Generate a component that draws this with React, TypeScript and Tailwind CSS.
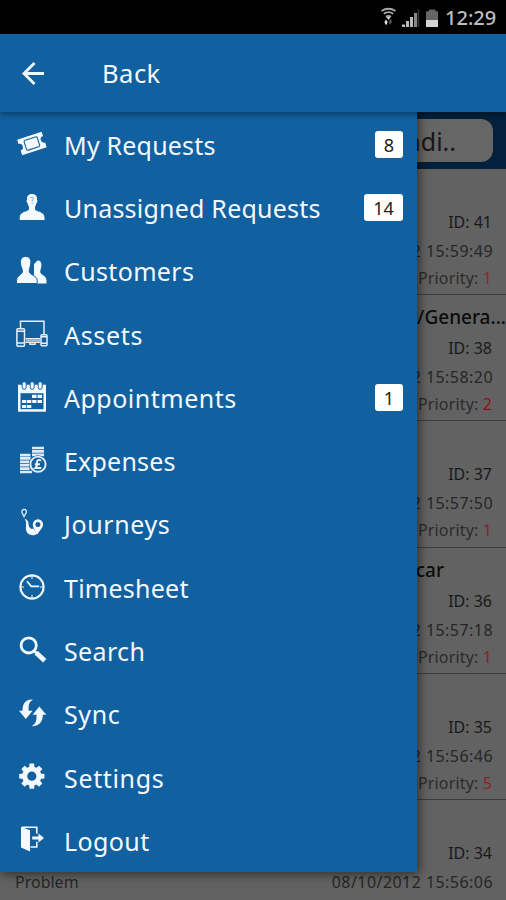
import type { ReactNode } from 'react';

const BLUE = '#1160a0';

function Icon({ children }: { children: ReactNode }) {
  return (
    <svg viewBox="0 0 32 32" className="mt-0.5 size-8 shrink-0" fill="#f4f8ff" stroke="none">
      {children}
    </svg>
  );
}

const icons: Record<string, ReactNode> = {
  ticket: (
    <g transform="rotate(-18 16 14.5)">
      <path d="M3 6.3H28.8V10.8A3.4 3.4 0 0 0 28.8 17.6V22.7H3V17.6A3.4 3.4 0 0 0 3 10.8Z" />
      <rect x="9" y="9.3" width="13.8" height="10.4" rx="1.5" fill="none" stroke={BLUE} strokeWidth="1.1" />
    </g>
  ),
  person: (
    <g>
      <path d="M16 2C20 2 21.3 4.5 21 8C21.7 8.3 21.4 10.4 20.5 11C20.2 13 19.2 14 19 15V17.5C20.5 19.8 28.5 19.5 28.5 25.5V28H3.7V25.5C3.7 19.5 11.5 19.8 13 17.5V15C12.8 14 11.8 13 11.5 11C10.6 10.4 10.3 8.3 11 8C10.7 4.5 12 2 16 2Z" />
      <path d="M14.8 5.6Q17.5 4.5 17.4 6.8Q16.2 8 16.2 9.5M16.2 11V12" fill="none" stroke={BLUE} strokeOpacity=".55" strokeWidth=".9" />
    </g>
  ),
  people: (
    <g>
      <path d="M21.5 5.5C25 5.5 25.8 8 25.3 11.5C25 13.7 24.2 15 24.2 17C24.5 20 30.5 20.3 30.5 25.5V28.5H18V9Z" />
      <path d="M9.5 1.5C14.4 1.5 15.4 5 14.6 10C14.2 12.5 13.2 14 13.2 16.5C13.7 20 21.2 20.5 21.2 25.5V28.5H.5V25.5C.5 20.5 6 20 6.5 16.5C6.5 14 5.2 12.5 4.7 10C3.8 5 5.3 1.5 9.5 1.5Z" stroke={BLUE} strokeWidth="1" />
    </g>
  ),
  devices: (
    <g fill="none" stroke="#e6effa" strokeWidth="1.5">
      <path d="M4.5 9.5V2.3H28V15M9.5 19.8H24M9.5 23.3H24M14 23.3V25.3H19V23.3" />
      <path d="M10 21.5H24" strokeOpacity=".65" />
      <rect x=".9" y="9.8" width="7.6" height="17.4" rx="1" />
      <path d="M1 12.3H8.5M1 24H8.5" />
      <rect x="25" y="15.7" width="6" height="11" rx="1" />
      <path d="M25 17.7H31M25 24.2H31" />
    </g>
  ),
  calendar: (
    <g transform="translate(0 -1.3)">
      <path d="M2 4H30V31H2Z" />
      <path d="M4.5 12.5H27.5V28.5H4.5Z" fill={BLUE} />
      <path d="M16 14H20.5V17.3H16ZM21.5 14H26V17.3H21.5ZM6 19.3H10.3V22.4H6ZM11 19.3H15.3V22.4H11ZM16.2 19.3H20.5V22.4H16.2ZM21.5 19.3H26V22.4H21.5ZM6 24.3H10.3V27.4H6ZM11 24.3H15.3V27.4H11Z" />
      <g stroke={BLUE} strokeWidth="1">
        <rect x="6.2" y="1" width="4" height="7.6" rx="2" />
        <rect x="14.2" y="1" width="4" height="7.6" rx="2" />
        <rect x="22.2" y="1" width="4" height="7.6" rx="2" />
      </g>
    </g>
  ),
  coins: (
    <g fill="#dfeaf7" transform="translate(0 -.8)">
      <path d="M16 2.5H28V5.1H16ZM16 5.9H28V8.5H16ZM16 9.3H28V12H16ZM4 9.5H14.5V12.2H4ZM4 12.9H14.5V15.6H4ZM4 16.3H13.5V19H4ZM4 19.7H13.5V22.4H4ZM4 23.1H13.5V25.8H4ZM4 26.5H16V29H4Z" />
      <circle cx="22" cy="20" r="8.9" fill={BLUE} />
      <circle cx="22" cy="20" r="7.6" fill="none" stroke="#e6effa" strokeWidth="1.9" />
      <path d="M25 16.7C23.3 14.8 20.5 15.8 21 18.2C21.4 20.2 21.5 22 19.4 23.8H25.3M18.8 20H24" fill="none" stroke="#e6effa" strokeWidth="1.9" />
    </g>
  ),
  route: (
    <g>
      <path d="M8.4 10.5C14.5 13 11.5 16.5 13.6 19.3C15 21 16 21 17.2 20.4L21.5 25.5C18.5 28.5 12.8 27.5 10.8 24C8.4 19.5 12 15 8.4 10.5Z" />
      <path d="M22 11.2A5.1 5.1 0 0 1 27 16.5C27 20 23.5 22.5 21.3 26.5C19.5 22.5 16.8 20 16.8 16.5A5.1 5.1 0 0 1 22 11.2Z" />
      <circle cx="21.9" cy="16.4" r="2.5" fill={BLUE} />
      <path d="M8.6 10.5L6.5 6.2A2.3 2.3 0 1 1 11 6.2Z" fill="none" stroke="#eaf2fc" strokeWidth="1.3" transform="translate(-.6 -2)" />
    </g>
  ),
  clock: (
    <g fill="none" stroke="#f0f6ff">
      <circle cx="16" cy="15" r="11.6" strokeWidth="2.1" />
      <path d="M11 9.3L15.2 14.4H23.2" strokeWidth="1.7" />
      <path d="M16 4V7M16 23V26M5 15H8M24 15H27" strokeWidth="1.1" />
    </g>
  ),
  search: (
    <g fill="none" stroke="#f4f8ff" transform="translate(0 -.5)">
      <circle cx="12.7" cy="10.9" r="7.6" strokeWidth="2.8" />
      <path d="M18.3 16.5L20.5 18.5" strokeWidth="3" />
      <path d="M20.2 18.3L28.7 26.3" strokeWidth="4.8" />
    </g>
  ),
  sync: (
    <g transform="translate(0 -.8)">
      <path d="M17 2.4C10 1.8 6.5 6 6.5 13.5H3L9.8 21.8L16.6 13.5H12.7C12.3 8 13 4.8 17 2.4Z" />
      <path d="M15.5 29C23 29 26.8 25 26.8 17.5H30.3L23.3 9.2L16.6 17.5H20.5C20.7 23 20 26.5 15.5 29Z" />
    </g>
  ),
  gear: (
    <g>
      <circle cx="15.8" cy="14.2" r="7.1" fill="none" stroke="#f4f8ff" strokeWidth="5" />
      <path d="M13.5 1.6H18.1L18.6 6.6H13ZM13.5 26.8H18.1L18.6 21.8H13ZM3.2 11.9V16.5L8 17V11.4ZM28.4 11.9V16.5L23.6 17V11.4ZM5.3 7L8.6 3.7L12.3 6.8L8.4 10.7ZM26.3 7L23 3.7L19.3 6.8L23.2 10.7ZM5.3 21.4L8.6 24.7L12.3 21.6L8.4 17.7ZM26.3 21.4L23 24.7L19.3 21.6L23.2 17.7Z" />
    </g>
  ),
  logout: (
    <g transform="translate(0 -.7)">
      <path d="M5 2.5L14 6V27.3L5 23.3Z" />
      <path d="M6 3H20.8V9.5M20.8 17.5V22.7H14.5" fill="none" stroke="#f4f8ff" strokeWidth="1.6" />
      <path d="M16.2 12.3H22.5V9.2L28 13.7L22.5 18.2V15.1H16.2Z" />
    </g>
  ),
};

const menu = [
  { icon: 'ticket', label: 'My Requests', badge: '8', tracking: 'tracking-[0.2px]' },
  { icon: 'person', label: 'Unassigned Requests', badge: '14', tracking: 'tracking-[0.22px]' },
  { icon: 'people', label: 'Customers', tracking: 'tracking-[0.35px]' },
  { icon: 'devices', label: 'Assets', tracking: 'tracking-[0.7px]' },
  { icon: 'calendar', label: 'Appointments', badge: '1', tracking: 'tracking-[0.5px]' },
  { icon: 'coins', label: 'Expenses', tracking: 'tracking-[0.2px]' },
  { icon: 'route', label: 'Journeys', tracking: 'tracking-[0.6px]' },
  { icon: 'clock', label: 'Timesheet', tracking: 'tracking-[0.25px]' },
  { icon: 'search', label: 'Search', tracking: 'tracking-[0.35px]' },
  { icon: 'sync', label: 'Sync', tracking: 'tracking-[0.6px]' },
  { icon: 'gear', label: 'Settings', tracking: 'tracking-[0.65px]' },
  { icon: 'logout', label: 'Logout', tracking: 'tracking-[0.4px]' },
];

const requests = [
  { id: 41, time: '2 15:59:49', priority: 1, tone: 'text-[#862d2d]' },
  { id: 38, time: '2 15:58:20', priority: 2, tone: 'text-[#8b1015]', title: '/Genera...', pad: 'pr-0' },
  { id: 37, time: '2 15:57:50', priority: 1, tone: 'text-[#862529]' },
  { id: 36, time: '2 15:57:18', priority: 1, tone: 'text-[#862529]', title: 'car', pad: 'pr-[62px]' },
  { id: 35, time: '2 15:56:46', priority: 5, tone: 'text-[#862529]' },
  { id: 34, time: '08/10/2012 15:56:06', kind: 'Problem' },
];

function StatusBar() {
  return (
    <div className="flex h-[34px] shrink-0 items-center justify-end bg-black pr-[9px] text-[#bdbdbd]">
      <svg viewBox="0 0 58 22" className="h-[22px] w-[58px]">
        <g fill="none" stroke="#aaa" strokeWidth="1.9">
          <path d="M.5 5Q7.5 .5 14.5 5M2.8 7.8Q7.5 4.5 12.2 7.8M5 10.7Q7.5 9 10 10.7" />
        </g>
        <path d="M5.5 11H9.5L7.5 14ZM5 13.5L7 16.5H6V18.5H4V16.5H3Z" fill="#ddd" />
        <path d="M9 18.5L7.5 15.5H8.5V13.5H10.5V15.5H11.5Z" fill="#555" />
        <path d="M21 18.5H24V21H21ZM25 15H28V21H25ZM29 11H32V21H29Z" fill="#bbb" />
        <path d="M33 7H36V21H33Z" fill="#888" />
        <path d="M36.5 3.5H38.3V21H36.5Z" fill="#333" />
        <path d="M45 5.2H48V3.5H54.5V5.2H57V14H45Z" fill="#666" />
        <path d="M45 14H57V21H45Z" fill="#d5d5d5" />
      </svg>
      <span className="ml-[6px] mt-0.5 w-[52px] whitespace-nowrap text-[20px] font-medium leading-none">12:29</span>
    </div>
  );
}

export default function App() {
  return (
    <div className="relative flex h-[900px] w-[506px] flex-col overflow-hidden bg-[#626262] font-['Noto_Sans',sans-serif]">
      <StatusBar />
      <header className="z-20 flex h-[78px] shrink-0 items-center bg-[#1160a0] pl-[21px] text-[#f4f8ff] shadow-[0_2px_6px_rgba(0,0,0,0.4)]">
        <svg viewBox="0 0 24 24" className="size-6" fill="none" stroke="currentColor" strokeWidth="2.8">
          <path d="M23 12.5H3M13.5 2L3 12.5L13.5 23" />
        </svg>
        <h1 className="ml-[57px] mt-0.5 text-[25.5px] leading-none tracking-[0.5px]">Back</h1>
      </header>

      <div className="flex h-[57px] shrink-0 items-center justify-end bg-[#03213c] pr-[13px]">
        <div className="flex h-[43px] w-[82px] items-center justify-end rounded-r-xl bg-[#666] pr-[37px] text-[25px] text-[#171717]">
          <span className="pt-0.5">ndi..</span>
        </div>
      </div>

      <main className="flex flex-col text-[#191919]">
        {requests.map((r) => (
          <section key={r.id} className="flex h-[126.2px] shrink-0 flex-col border-b border-[#3b3b3b] text-right">
            <div className={`h-[39px] pt-[8px] text-[19px] font-medium leading-[28px] text-[#0c0c0c] ${r.pad ?? ''}`}>{r.title}</div>
            <div className="h-[29px] pr-[14px] text-[16px] leading-[29px]">ID: {r.id}</div>
            <div className="flex h-[28px] justify-between pl-[15px] pr-[13px] text-[16px] leading-[29px] text-[#262626]">
              <span>{r.kind}</span>
              <span className="tracking-[0.45px]">{r.time}</span>
            </div>
            {r.priority && (
              <div className="pr-[14px] text-[16px] leading-[26px] tracking-[0.15px] text-[#2b2b2b]">
                Priority: <span className={r.tone}>{r.priority}</span>
              </div>
            )}
          </section>
        ))}
      </main>

      <nav className="absolute left-0 top-[112px] z-10 flex h-[760px] w-[417px] flex-col bg-[#1160a0] text-[#f4f8ff] shadow-[2px_2px_10px_rgba(0,0,0,0.55)]">
        {menu.map((m) => (
          <div key={m.label} className="flex h-[63.3px] shrink-0 items-center pl-4 pr-[14px]">
            <Icon>{icons[m.icon]}</Icon>
            <span className={`ml-4 mt-[3px] flex-1 whitespace-nowrap text-[25px] leading-none ${m.tracking}`}>{m.label}</span>
            {m.badge && (
              <span className={`mt-px flex h-[27px] items-center justify-center rounded-[3px] bg-white text-[18px] leading-none text-[#222] ${m.badge.length > 1 ? 'w-[39px]' : 'w-[28px]'}`}>
                <span className="pt-0.5">{m.badge}</span>
              </span>
            )}
          </div>
        ))}
      </nav>
    </div>
  );
}
